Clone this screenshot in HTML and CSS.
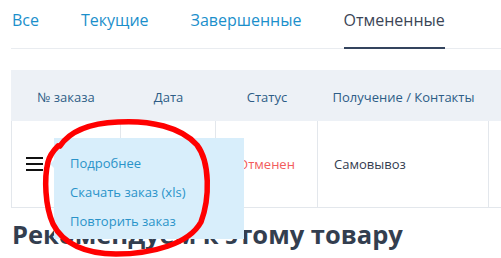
FILE: index.html
```html
<!DOCTYPE html>
<html lang="ru">
<head>
<meta charset="utf-8">
<link rel="stylesheet" href="styles.css">
</head>
<body>
<div class="page">
  <nav class="tabs">
    <a class="tab">Все</a>
    <a class="tab">Текущие</a>
    <a class="tab">Завершенные</a>
    <a class="tab active">Отмененные</a>
  </nav>

  <div class="orders">
    <div class="row head">
      <div class="cell c1">№ заказа</div>
      <div class="cell c2">Дата</div>
      <div class="cell c3">Статус</div>
      <div class="cell c4">Получение / Контакты</div>
      <div class="cell c5"></div>
    </div>
    <div class="row body">
      <div class="cell c1 menu-cell">
        <span class="burger"><i></i><i></i><i></i></span>
        <div class="dropdown">
          <a>Подробнее</a>
          <a>Скачать заказ (xls)</a>
          <a>Повторить заказ</a>
        </div>
      </div>
      <div class="cell c2"></div>
      <div class="cell c3 status">Отменен</div>
      <div class="cell c4 delivery">Самовывоз</div>
      <div class="cell c5"></div>
    </div>
  </div>

  <h2 class="rec">Рекомендуем к этому товару</h2>

  <svg class="scribble" width="501" height="258" viewBox="0 0 501 258">
    <path d="M60 146 C72 128 95 123 118 122 C150 120 181 127 197 145 C210 162 210 198 201 222 C189 244 152 254 116 254 C86 254 63 244 53 224 C45 206 44 178 48 162 C50 154 54 150 58 146" fill="none" stroke="#ff0000" stroke-width="5.5" stroke-linecap="round" stroke-linejoin="round"/>
  </svg>
</div>
</body>
</html>
```

FILE: styles.css
```css
* { box-sizing: border-box; }
html, body { margin: 0; padding: 0; background: #fff; }
body {
  font-family: "Open Sans", "Noto Sans", sans-serif;
  overflow: hidden;
  width: 501px;
  height: 258px;
}
.page {
  position: relative;
  padding-left: 11px;
  height: 258px;
}
.tabs {
  display: flex;
  gap: 42px;
  height: 49px;
  border-bottom: 1px solid #e9ecf0;
  padding-left: 1px;
}
.tab {
  display: block;
  font-size: 16px;
  line-height: 22px;
  padding-top: 9px;
  height: 49px;
  color: #1b8fcb;
  cursor: pointer;
}
.tab.active {
  color: #3b4556;
  border-bottom: 2px solid #34445e;
}
.orders {
  margin-top: 21px;
}
.row {
  display: flex;
}
.row.head {
  background: #edf1f6;
  height: 51px;
}
.row.head .cell {
  font-size: 13px;
  color: #2d5d86;
  text-align: center;
  padding-top: 18px;
}
.row.body {
  height: 87px;
  border-bottom: 1px solid #e3e7ec;
}
.cell { flex: none; }
.c1 { width: 110px; }
.c2 { width: 95px; }
.c3 { width: 102px; }
.c4 { width: 171px; }
.c5 { flex: 1 1 auto; }
.row.body .cell {
  border-right: 1px solid #e3e7ec;
  font-size: 13px;
  display: flex;
  align-items: center;
}
.row.body .c5 { border-right: none; }
.row.body .c1 { border-left: 1px solid #e3e7ec; }
.menu-cell {
  position: relative;
  padding-left: 14px;
}
.burger {
  display: flex;
  flex-direction: column;
  gap: 4px;
  width: 17px;
}
.burger i {
  display: block;
  height: 2px;
  background: #111;
}
.dropdown {
  position: absolute;
  left: 42px;
  top: 17px;
  width: 190px;
  height: 101px;
  background: #d8eefb;
  padding: 11px 0 0 16px;
  display: flex;
  flex-direction: column;
  z-index: 2;
}
.dropdown::before {
  content: "";
  position: absolute;
  left: -4px;
  top: 22px;
  border-top: 4px solid transparent;
  border-bottom: 4px solid transparent;
  border-right: 4px solid #d8eefb;
}
.dropdown a {
  font-size: 13px;
  line-height: 29px;
  color: #2a93c9;
  white-space: nowrap;
}
.status {
  justify-content: center;
  color: #f25c5c;
}
.delivery {
  padding-left: 16px;
  color: #333c50;
}
.rec {
  margin: 11px 0 0 1px;
  font-size: 25.5px;
  line-height: 31px;
  font-weight: 700;
  color: #333e4f;
  white-space: nowrap;
}
.scribble {
  position: absolute;
  left: 0;
  top: 0;
  pointer-events: none;
  z-index: 5;
}
```
